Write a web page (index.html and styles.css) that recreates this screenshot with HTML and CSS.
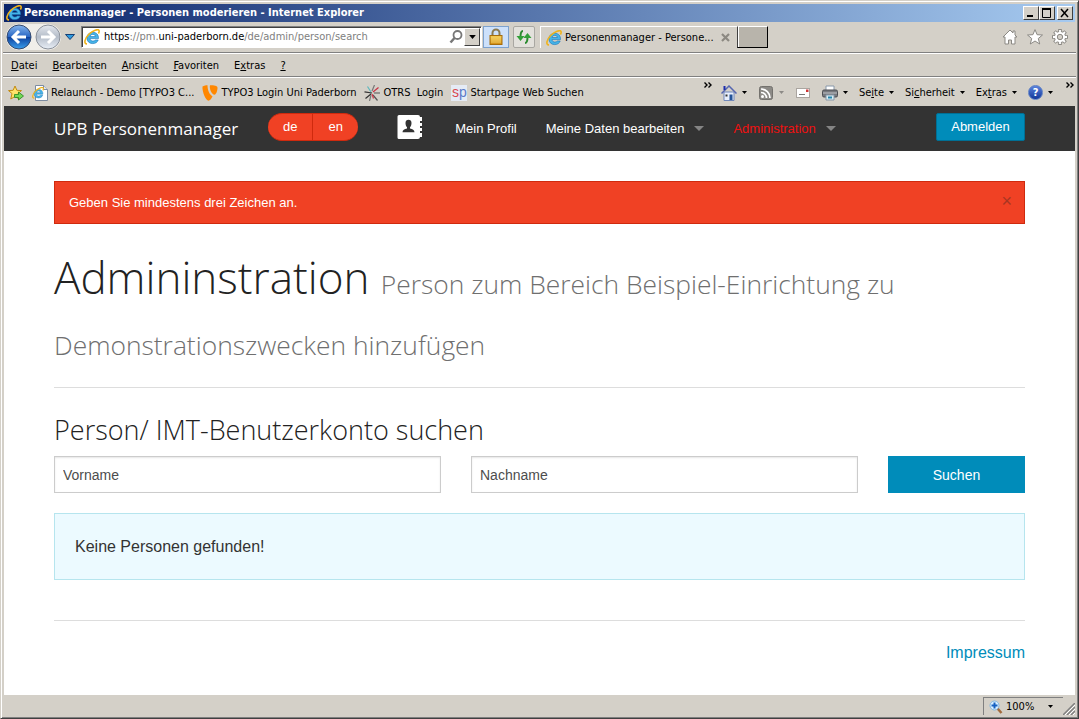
FILE: index.html
```html
<!DOCTYPE html>
<html lang="de">
<head>
<meta charset="utf-8">
<title>Personenmanager - Personen moderieren</title>
<link rel="stylesheet" href="styles.css">
</head>
<body>
<svg class="defs" aria-hidden="true">
  <defs>
    <linearGradient id="blueball" x1="0" y1="0" x2="0" y2="1"><stop offset="0" stop-color="#86b5ec"/><stop offset=".48" stop-color="#2b68c5"/><stop offset=".5" stop-color="#0d3f9c"/><stop offset="1" stop-color="#3ba0ee"/></linearGradient>
    <linearGradient id="greyball" x1="0" y1="0" x2="0" y2="1"><stop offset="0" stop-color="#e4e8ee"/><stop offset=".5" stop-color="#b4bcc8"/><stop offset="1" stop-color="#e9eff7"/></linearGradient>
    <linearGradient id="gold" x1="0" y1="0" x2="0" y2="1"><stop offset="0" stop-color="#f7cf55"/><stop offset="1" stop-color="#d08b12"/></linearGradient>
    <symbol id="ie" viewBox="0 0 16 16">
      <path d="M14.500 9.600H6c.2 1.600 1.300 2.500 2.900 2.500 1.100 0 1.900-.4 2.400-1.100h2.900c-.8 2.300-2.700 3.600-5.400 3.600-3.500 0-5.900-2.200-5.900-5.600s2.400-5.700 5.900-5.700c3.700 0 5.900 2.400 5.700 6.300zM6.100 7.500h5.300c-.2-1.400-1.200-2.100-2.600-2.100s-2.400.7-2.700 2.100z" fill="#46b4e8" stroke="#1a76b8" stroke-width=".6"/>
      <path d="M3 14.900C-.5 15 .6 9.500 4.900 5.200 8.900 1.300 14.200-.300 15 1.400c.4.800.1 1.900-.6 3.100" fill="none" stroke="#efb31c" stroke-width="1.600"/>
    </symbol>
    <symbol id="down" viewBox="0 0 5 3"><path d="M0 0h5L2.500 3z" fill="currentColor"/></symbol>
    <symbol id="more" viewBox="0 0 8 6"><path d="M.5.500 3 3 .5 5.500M4.500.500 7 3 4.500 5.500" fill="none" stroke="#000" stroke-width="1.400"/></symbol>
  </defs>
</svg>
<div class="window">
  <header class="titlebar">
    <svg class="icon"><use href="#ie"/></svg>
    <span class="title">Personenmanager - Personen moderieren - Internet Explorer</span>
    <button class="caption" aria-label="Minimieren"><svg width="12" height="10" viewBox="0 0 12 10"><path d="M2 8h6" stroke="#000" stroke-width="2"/></svg></button>
    <button class="caption" aria-label="Maximieren"><svg width="12" height="10" viewBox="0 0 12 10"><path d="M1.500 1v8.500h8V1" fill="none" stroke="#000"/><path d="M1 1h9" stroke="#000" stroke-width="2"/></svg></button>
    <button class="caption close" aria-label="Schließen"><svg width="12" height="10" viewBox="0 0 12 10"><path d="m2 1 7 8M9 1 2 9" stroke="#000" stroke-width="1.500"/></svg></button>
  </header>

  <div class="addressrow">
    <div class="history">
      <button class="ball" aria-label="Zurück"><svg width="26" height="26" viewBox="0 0 26 26"><circle cx="13" cy="13" r="12" fill="url(#blueball)" stroke="#34496e"/><path d="M20 13H8M13 7l-6 6 6 6" fill="none" stroke="#fff" stroke-width="3"/></svg></button>
      <button class="ball" aria-label="Vorwärts"><svg width="26" height="26" viewBox="0 0 26 26"><circle cx="13" cy="13" r="12" fill="url(#greyball)" stroke="#8b919b"/><path d="M6 13h12M13 7l6 6-6 6" fill="none" stroke="#fff" stroke-width="3"/></svg></button>
    </div>
    <button class="recent" aria-label="Verlauf"><svg width="10" height="6" viewBox="0 0 10 6"><path d="M.5.500h9L5 5.500z" fill="#2d9be0" stroke="#153f75"/></svg></button>
    <div class="address">
      <svg class="icon"><use href="#ie"/></svg>
      <div class="url">https<i>://pm.</i>uni-paderborn.de<i>/de/admin/person/search</i></div>
      <svg width="16" height="16" viewBox="0 0 16 16"><circle cx="9.500" cy="6" r="4" fill="none" stroke="#777" stroke-width="1.800"/><path d="m6.500 9-4 4.500" stroke="#777" stroke-width="2.500"/></svg>
      <button class="drop" aria-label="Adressliste"><svg width="7" height="4"><use href="#down"/></svg></button>
    </div>
    <button class="lock" aria-label="Sicherheitsbericht"><svg width="16" height="18" viewBox="0 0 16 18"><path d="M4.500 8V5a3.500 3.500 0 0 1 7 0v3" fill="none" stroke="#8a7a52" stroke-width="2"/><rect x="2" y="7.500" width="12" height="9" fill="url(#gold)" stroke="#a56c0c"/><path d="M3 10h10M3 12h10M3 14h10" stroke="#f9dc7c" stroke-width=".7"/></svg></button>
    <button class="refresh" aria-label="Aktualisieren"><svg width="16" height="14" viewBox="0 0 16 14"><path d="M7 1C5 1 4.500 3 4.500 7M9 13c2 0 2.500-2 2.500-6" fill="none" stroke="#2a8a2e" stroke-width="2"/><path d="M.500 6h8l-4 5zM7.500 8h8l-4-5z" fill="#33a038"/></svg></button>
    <div class="tab"><svg class="icon"><use href="#ie"/></svg><span>Personenmanager - Persone...</span><button class="plain" aria-label="Tab schließen"><svg width="10" height="10" viewBox="0 0 10 10"><path d="m1 1 7 7M8 1 1 8" stroke="#8c8982" stroke-width="2.200"/></svg></button></div>
    <button class="newtab" aria-label="Neuer Tab"></button>
    <div class="tools">
      <button class="plain" aria-label="Startseite"><svg width="16" height="16" viewBox="0 0 16 16"><path d="M8 1 1 8h2v7h3.500v-4h3v4H13V8h2l-2-2V2h-2v2z" fill="#fff" stroke="#8b8984"/></svg></button>
      <button class="plain" aria-label="Favoriten"><svg width="16" height="16" viewBox="0 0 16 16"><path d="m8 .6 2.100 5.100 5.400.3-4.200 3.500 1.400 5.500L8 12l-4.700 3 1.400-5.500L.5 6l5.400-.3z" fill="#fff" stroke="#8b8984"/></svg></button>
      <button class="plain" aria-label="Extras"><svg width="16" height="16" viewBox="0 0 16 16"><path d="M8 0v16M0 8h16M2.400 2.400l11.200 11.200M13.600 2.400 2.400 13.600" stroke="#8b8984" stroke-width="3.600"/><circle cx="8" cy="8" r="5.600" fill="#fff" stroke="#8b8984"/><path d="M8 1v14M1 8h14M3 3l10 10M13 3 3 13" stroke="#fff" stroke-width="1.800"/><circle cx="8" cy="8" r="2.700" fill="#d4d0c8" stroke="#8b8984"/></svg></button>
    </div>
  </div>

  <nav class="menubar" aria-label="Menü">
    <button><u>D</u>atei</button><button><u>B</u>earbeiten</button><button><u>A</u>nsicht</button><button><u>F</u>avoriten</button><button>E<u>x</u>tras</button><button><u>?</u></button>
  </nav>

  <div class="linksrow">
    <div class="favorites">
      <button class="plain" aria-label="Zu Favoriten hinzufügen"><svg class="icon" viewBox="0 0 16 16"><path d="m7 1 1.900 4.300 4.600.3L10 8.500l1.200 5.500L7 11.500 2.800 14 4 8.500.5 5.600l4.600-.3z" fill="#ffe36b" stroke="#c28a13"/><path d="M6.500 9.500h4V7l5 4-5 4v-2.500h-4z" fill="#72d957" stroke="#25831c" stroke-width=".8"/></svg></button>
      <a href="#"><svg class="icon" viewBox="0 0 16 16"><path d="M3.500.5h8l4 4v11h-12z" fill="#fff" stroke="#7c8ba0"/><path d="M11.500.5v4h4" fill="#dfe6ef" stroke="#7c8ba0"/><use href="#ie" x="0" y="2" width="12" height="12"/></svg>Relaunch - Demo [TYPO3 C...</a>
      <a href="#"><svg class="icon" viewBox="0 0 16 16"><path d="M.5 1.500C2 .7 4 .3 5.500.3c0 5 2 9.500 5 11-1 2.500-2.700 4.400-4 4.400C4 15.700 0 7 .5 1.500z" fill="#ff8700"/><path d="M8 .3c4 0 7.500.3 7.500 2.500 0 3-1.500 7-3 7C10 9.800 7 4 8 .3z" fill="#ff8700"/></svg>TYPO3 Login Uni Paderborn</a>
      <a href="#"><svg class="icon" viewBox="0 0 16 16"><g fill="none" stroke-width="1.200"><path d="M8 8 .5 6.800M7 9l-5.500 4.500" stroke="#333"/><path d="M7 7 3.500 1.500" stroke="#5cb8bd"/><path d="m8 6 2.500-6M7 10l-1.500 6" stroke="#777"/><path d="m9 7 5.500-4.500" stroke="#c83345"/><path d="M10 8h6M9 10l4.500 5.500" stroke="#555"/><path d="m8 9 1.500 4.500" stroke="#d2394a"/></g></svg>OTRS&nbsp; Login</a>
      <a href="#"><span class="sp"><b>s</b>p</span>Startpage Web Suchen</a>
    </div>
    <svg class="more" width="8" height="6"><use href="#more"/></svg>
    <div class="commands">
      <button class="cmd"><svg class="icon" viewBox="0 0 16 16"><path d="M3 7h10v8.500H3z" fill="#e8effc" stroke="#7088bb"/><path d="M.5 8.500 8 1l7.500 7.500" fill="none" stroke="#5566b0" stroke-width="1.500"/><path d="M2.500 1h2v4h-2z" fill="#1c2dad"/><path d="M8.500 9.500h3V15h-3z" fill="#245398"/><path d="M4.500 9.500h2v2h-2z" fill="#333"/></svg><svg class="arrow"><use href="#down"/></svg></button>
      <button class="cmd dim"><svg class="icon" viewBox="0 0 16 16"><rect x="1.500" y="1.500" width="13" height="13" rx="2" fill="#8c8a86" stroke="#74726e"/><circle cx="4.500" cy="11.500" r="1.500" fill="#fff"/><path d="M3 7.500a5.500 5.500 0 0 1 5.500 5.500M3 4a9 9 0 0 1 9 9" fill="none" stroke="#fff" stroke-width="1.700"/></svg><svg class="arrow"><use href="#down"/></svg></button>
      <button class="cmd"><svg class="icon" viewBox="0 0 16 16"><rect x="1.500" y="3.500" width="13" height="9" fill="#fff" stroke="#aaa5a0"/><path d="M11 4.500h2.500V7H11z" fill="#ce3434"/><path d="M4 9.500h6" stroke="#777"/></svg></button>
      <button class="cmd"><svg class="icon" viewBox="0 0 16 16"><path d="M4 1h8v5H4z" fill="#fff" stroke="#8898aa"/><rect x=".5" y="5" width="15" height="7" rx="1.500" fill="#77797e" stroke="#4d4f55"/><path d="M1 8h14" stroke="#c3c5ca"/><path d="M4 10h8v5H4z" fill="#d7eef5" stroke="#8898aa"/><path d="M6 12.500h4" stroke="#2585ac" stroke-width="2"/></svg><svg class="arrow"><use href="#down"/></svg></button>
      <button class="cmd">Se<u>i</u>te<svg class="arrow"><use href="#down"/></svg></button>
      <button class="cmd">Si<u>c</u>herheit<svg class="arrow"><use href="#down"/></svg></button>
      <button class="cmd">Ex<u>t</u>ras<svg class="arrow"><use href="#down"/></svg></button>
      <button class="cmd"><span class="help">?</span><svg class="arrow"><use href="#down"/></svg></button>
    </div>
    <svg class="more" width="8" height="6"><use href="#more"/></svg>
  </div>

  <div class="page">
    <nav class="topbar">
      <a class="brand" href="#">UPB Personenmanager</a>
      <div class="lang"><button>de</button><button>en</button></div>
      <svg class="book" width="26" height="26" viewBox="0 0 26 26"><path d="M2 1h19a2 2 0 0 1 2 2v20a2 2 0 0 1-2 2H2a1.500 1.500 0 0 1-1.500-1.500v-21A1.500 1.500 0 0 1 2 1z" fill="#fff"/><path d="M22 3h3v4h-3zM22 9h3v3h-3zM22 14h3v3h-3zM22 19h3v4h-3z" fill="#fff"/><path d="M8.500 9c0-2 1.200-3.200 3-3.200s3 1.200 3 3.200-.6 3.200-1.500 4.200v1.300c2.500.6 4.500 1.200 4.500 3.700H5.500c0-2.500 2-3.100 4.500-3.700v-1.300C9.100 12.200 8.500 11 8.500 9z" fill="#333"/></svg>
      <a class="navlink" href="#">Mein Profil</a>
      <a class="navlink has-menu" href="#">Meine Daten bearbeiten</a>
      <a class="navlink has-menu active" href="#">Administration</a>
      <button class="logout">Abmelden</button>
    </nav>
    <main class="content">
      <div class="alert" role="alert"><span>Geben Sie mindestens drei Zeichen an.</span><button aria-label="Meldung schließen">×</button></div>
      <h1>Admininstration <small>Person zum Bereich Beispiel-Einrichtung zu Demonstrationszwecken hinzufügen</small></h1>
      <hr>
      <h2>Person/ IMT-Benutzerkonto suchen</h2>
      <form class="search">
        <input type="text" placeholder="Vorname" aria-label="Vorname">
        <input type="text" placeholder="Nachname" aria-label="Nachname">
        <button type="button">Suchen</button>
      </form>
      <p class="panel">Keine Personen gefunden!</p>
      <hr>
      <footer><a href="#">Impressum</a></footer>
    </main>
  </div>

  <div class="statusbar">
    <button class="zoom"><svg width="14" height="14" viewBox="0 0 14 14"><path d="m8.500 8.500 4 4.500" stroke="#a26a3c" stroke-width="2.500"/><circle cx="5.500" cy="5.500" r="4.500" fill="#d9efff" stroke="#83b6df"/><path d="M5.500 2.500v6M2.500 5.500h6" stroke="#1661c2" stroke-width="2"/></svg><span>100%</span><svg class="arrow"><use href="#down"/></svg></button>
    <svg class="grip" width="12" height="12" viewBox="0 0 12 12"><path d="M0 12 12 0M4 12l8-8M8 12l4-4" stroke="#808080" stroke-width="1.500"/><path d="M2 12 12 2M6 12l6-6M10 12l2-2" stroke="#fff"/></svg>
  </div>
</div>
</body>
</html>
```

FILE: styles.css
```css
* { box-sizing: border-box; }
body { margin: 0; background: #d4d0c8; }
button { margin: 0; padding: 0; border: 0; background: none; font: inherit; color: inherit; }
a { text-decoration: none; color: inherit; }
svg { display: block; flex: none; }
.defs { position: absolute; width: 0; height: 0; }

.window {
  display: flex; flex-direction: column; min-height: 100vh;
  padding: 2px;
  border: 1px solid #d4d0c8; border-right-color: #404040; border-bottom-color: #404040;
  box-shadow: inset 1px 1px #fff, inset -1px -1px #808080;
  font: 11px/14px "DejaVu Sans Condensed", "DejaVu Sans", sans-serif; color: #000;
}
.icon { width: 16px; height: 16px; }
.arrow { width: 5px; height: 3px; }

.titlebar {
  display: flex; align-items: center; height: 18px; margin: 1px 1px 0; padding: 0 2px;
  background: linear-gradient(90deg, #0a246a, #a6caf0); color: #fff; font-weight: bold;
}
.title { flex: 1; padding-left: 2px; white-space: nowrap; }
.caption {
  display: flex; align-items: center; justify-content: center; width: 16px; height: 14px;
  background: #d4d0c8; border: 1px solid; border-color: #fff #404040 #404040 #fff;
}
.close { margin-left: 2px; }

.addressrow { display: flex; align-items: center; height: 31px; padding: 0 8px 0 3px; border-bottom: 1px solid #808080; box-shadow: 0 1px #fff; }
.history { display: flex; gap: 3px; border-radius: 13px; background: #f0eeea; }
.recent { margin: 0 6px 0 4px; }
.address { display: flex; align-items: center; width: 401px; height: 22px; padding: 0 1px 0 2px; background: #fff; border: 1px solid; border-color: #808080 #fff #fff #808080; box-shadow: inset 1px 1px #404040; }
.url { flex: 1; padding-left: 4px; white-space: nowrap; }
.url i { font-style: normal; color: #808080; }
.drop { display: flex; align-items: center; justify-content: center; width: 16px; height: 18px; background: #d4d0c8; border: 1px solid; border-color: #fff #404040 #404040 #fff; }
.lock { display: flex; align-items: center; justify-content: center; width: 26px; height: 22px; margin-left: 1px; background: #cde1fb; border: 1px solid #7da2ce; }
.refresh { display: flex; align-items: center; justify-content: center; width: 22px; height: 22px; margin-left: 4px; background: #e3e1dc; border: 1px solid #a9a7a2; border-radius: 2px; }
.tab { display: flex; align-items: center; width: 197px; height: 22px; margin-left: 5px; padding-left: 5px; border-top: 1px solid #fff; border-left: 1px solid #fff; white-space: nowrap; }
.tab span { flex: 1; padding-left: 3px; }
.tab .plain { margin-right: 6px; }
.newtab { width: 31px; height: 22px; background: #b8b4ab; border: 1px solid; border-color: #fff #000 #000 #404040; box-shadow: inset 1px 0 #fff; }
.tools { display: flex; gap: 9px; margin-left: auto; }

.menubar { display: flex; gap: 15px; align-items: center; height: 24px; padding: 2px 8px 0; border-bottom: 1px solid #808080; box-shadow: 0 1px #fff; }

.linksrow { display: flex; align-items: center; height: 29px; padding: 2px 2px 0 5px; }
.favorites { display: flex; gap: 8px; flex: 1; }
.favorites a { display: flex; align-items: center; gap: 3px; white-space: nowrap; }
.sp { width: 16px; height: 16px; background: #e5ebf5; color: #5a7ac8; font: 14px/14px "Liberation Sans", sans-serif; text-align: center; }
.sp b { color: #d9484e; font-weight: normal; }
.more { align-self: flex-start; margin-top: 3px; }
.commands { display: flex; gap: 11px; margin: 0 13px 0 9px; }
.cmd { display: flex; align-items: center; white-space: nowrap; }
.cmd .arrow { margin-left: 5px; }
.dim .arrow { color: #8c8a86; }
.help { width: 15px; height: 15px; border: 1px solid #5d7fc4; border-radius: 50%; background: linear-gradient(#5a82dc, #12379a); color: #fff; font-weight: bold; line-height: 13px; text-align: center; }

.page { flex: 1; margin: 0 1px; background: #fff; color: #222; font-family: "Liberation Sans", Arial, sans-serif; }
.topbar { display: flex; align-items: center; height: 45px; padding: 0 50px; background: #333; color: #fff; font-size: 13px; white-space: nowrap; }
.brand { font: 17px/45px "Open Sans", sans-serif; }
.lang { display: flex; height: 28px; margin: 0 39px 4px 30px; }
.lang button { width: 45px; background: #f04124; border: 1px solid #cf2a0e; border-width: 1px 0; }
.lang button:first-child { border-radius: 14px 0 0 14px; border-right-width: 1px; }
.lang button:last-child { border-radius: 0 14px 14px 0; }
.book { margin: 0 32px 4px 0; }
.navlink { display: flex; align-items: center; margin-right: 29px; }
.has-menu::after { content: ""; margin-left: 10px; border: 5px solid transparent; border-top-color: #858585; border-bottom: 0; }
.active { color: #f01010; }
.logout { width: 89px; height: 28px; margin: 0 0 4px auto; border: 1px solid #007095; border-radius: 2px; background: #008cba; }

.content { padding: 30px 50px 24px; }
.alert { display: flex; align-items: center; justify-content: space-between; height: 43px; padding: 0 12px 0 14px; border: 1px solid #cf2a0e; background: #f04124; color: #fff; font-size: 13px; }
.alert button { padding-bottom: 4px; color: #a83522; font-size: 18px; }
h1, h2 { margin: 0; font-family: "Open Sans", sans-serif; font-weight: 300; }
h1 { margin-top: 23px; font-size: 44px; line-height: 61px; }
h1 small { font-size: 60%; line-height: 1; color: #6f6f6f; }
hr { height: 1px; margin: 18px 0 0; border: 0; background: #ddd; }
h2 { margin: 23px 0 8px; font-size: 27px; line-height: 37px; }
.search { display: flex; gap: 30px; }
.search input { flex: 1; min-width: 0; height: 37px; padding: 0 8px; border: 1px solid #ccc; border-radius: 0; box-shadow: inset 0 1px 2px #0000001a; font: 14px "Liberation Sans", Arial, sans-serif; }
.search input::placeholder { color: #4d4d4d; opacity: 1; }
.search button { width: 137px; height: 37px; background: #008cba; color: #fff; font-size: 14px; }
.panel { margin: 20px 0 40px; padding: 20px; border: 1px solid #b6e5ee; background: #ecfaff; font-size: 16px; line-height: 25px; color: #333; }
footer { margin-top: 20px; text-align: right; font-size: 16px; line-height: 24px; color: #008cba; }

.statusbar { display: flex; align-items: flex-end; justify-content: flex-end; height: 21px; padding: 0 1px 1px 0; }
.zoom { display: flex; align-items: center; height: 18px; width: 80px; padding: 0 0 0 5px; border-top: 1px solid #808080; border-left: 1px solid #808080; }
.zoom span { padding: 0 14px 0 3px; }
```
